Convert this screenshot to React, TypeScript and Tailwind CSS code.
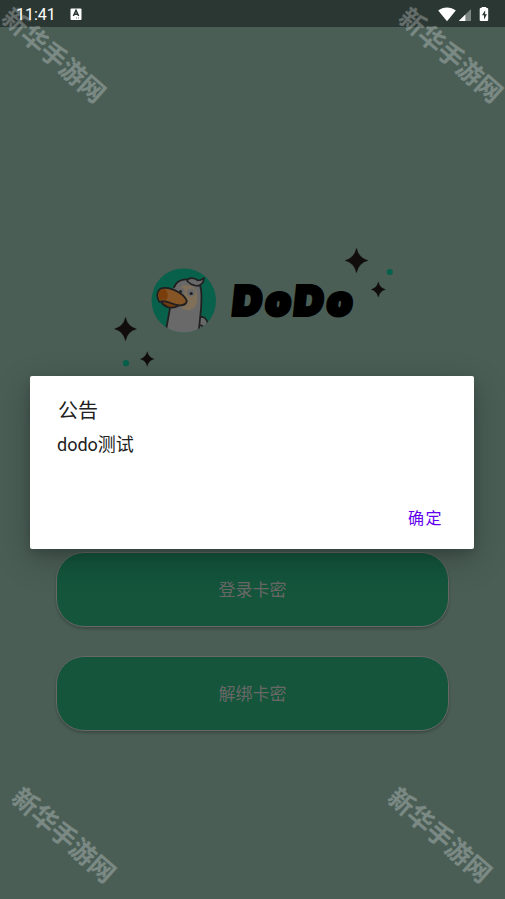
import { FC } from 'react';
import cx from "clsx"

const SANS = "font-['Roboto','Noto_Sans_CJK_SC',sans-serif]"

const StatusBar: FC = () => (
  <header className="flex h-[27px] items-center justify-between bg-[#2b3733] pl-4 pr-4 text-white">
    <div className="flex items-center gap-[15px]">
      <span className="w-[39px] pt-[2px] text-[16px] leading-[25px]">11:41</span>
      <svg width="12" height="12" viewBox="0 0 12 12">
        <rect x="0.5" y="0.5" width="11" height="11.5" rx="1" fill="#fff" />
        <path d="M3.400 8 6 2.300 8.600 8M4.400 6.300h3.200" fill="none" stroke="#26302d" strokeWidth="1.5" />
        <path d="M6 10h1M8 10h1" stroke="#6b7471" strokeWidth="1" />
      </svg>
    </div>
    <svg width="51" height="16" viewBox="438 5 51 16">
      <path d="M438.2 9.4C443.4 5.4 450.5 5.4 455.8 9.4L447 20.2z" fill="#fff" />
      <path d="M471 8v12h-12.2z" fill="#7c8582" />
      <path d="M465.4 13.6V20h-6.6z" fill="#fff" />
      <path d="M481.600 6h4.600v1h0.900q1.100 0 1.100 1.100v10.800q0 1.100-1.100 1.100h-6.300q-1.100 0-1.100-1.100V8.100q0-1.100 1.100-1.100h0.800z" fill="#fff" />
      <path d="M485.200 9.300l-3.200 5h2v4.200l3-5.200h-1.900z" fill="#2b3733" />
    </svg>
  </header>
)

interface SparkProps {
  x: number
  y: number
  r: number
}

const Spark: FC<SparkProps> = ({x, y, r}) => (
  <path
    transform={`translate(${x} ${y}) scale(${r})`}
    d="M0-1.06Q.2-.2 1 0 .2.2 0 1.06-.2.2-1 0-.2-.2 0-1.06z"
    fill="#110d0c"
    stroke="#110d0c"
    strokeWidth="0.03"
  />
)

const Logo: FC = () => (
  <svg className="mx-auto block" width="281" height="124" viewBox="112 246 281 124">
    <defs>
      <clipPath id="avatar"><circle cx="183.8" cy="300.6" r="32.2" /></clipPath>
    </defs>
    <g clipPath="url(#avatar)">
      <rect x="151" y="268" width="66" height="66" fill="#07614b" />
      <path d="M199 318C203 315 207 319 207.500 323L206 336H196z" fill="#6a696a" stroke="#211f20" strokeWidth="1.600" />
      <path d="M199.500 326q1.500-1.500 3 0l-1 2" fill="none" stroke="#211f20" strokeWidth="1.400" />
      <path d="M164.500 336 170 304C171 288 175 280 186 279 197 278 202.500 285 202 297L201 311 198 336z" fill="#6a696a" />
      <path d="M178 291C179 286 184 284.500 189 285.500 195 287 197.500 291 197.300 298 197.500 306 193 311 186 310 181 309 178 305 178 291z" fill="#80705a" />
      <circle cx="180.500" cy="291.500" r="4.200" fill="#6a696a" />
      <circle cx="191" cy="292.500" r="4" fill="#6a696a" />
      <g stroke="#211f20" strokeWidth="1.800" strokeLinejoin="round" strokeLinecap="round">
        <path d="M165 336 170 308M174 287.500C176 281.500 182 279 187 279.500M199.500 284.500C202.300 289 201.800 298 201 309L198.500 334" fill="none" />
        <path d="M187 281C189 277 194 277.500 198 280.500 202 280.500 203 278.500 204 278 204 283 200 287 195 285.500 191 285 189 283 187 281z" fill="#6a696a" strokeWidth="1.600" />
        <path d="M161.500 302C164 307 171 309 177 306.500L183 303.500 166 300z" fill="#713d10" />
        <path d="M159.500 302C155.500 296 157 287.500 165 287.800 174 288 185 295 186.800 301 186 306 179 306.500 172 303.500 168 302 164 299.500 159.500 302z" fill="#855525" />
      </g>
      <path d="M160 300.500C157 295 158.500 288.800 165 288.900 168 292 168.500 296 166.500 300 164 299 161.500 299.500 160 300.500z" fill="#7a3e0d" />
      <circle cx="180.500" cy="291.500" r="1.500" fill="#211f20" />
      <circle cx="191.200" cy="293.500" r="1.600" fill="#211f20" />
    </g>
    <text
      transform="translate(0 315) skewX(-6)"
      x="231.500 264.400 293 325.900"
      y="0"
      className="font-['Inter',sans-serif] text-[40px] font-black"
      fill="#000"
      stroke="#000"
      strokeWidth="4"
    >
      DoDo
    </text>
    <Spark x={356.500} y={260.500} r={11.500} />
    <Spark x={378.300} y={289.500} r={7.200} />
    <Spark x={125.500} y={329} r={11} />
    <Spark x={147.200} y={359} r={7} />
    <circle cx="389.800" cy="272" r="3.100" fill="#07614b" />
    <circle cx="126" cy="363.200" r="3.100" fill="#07614b" />
  </svg>
)

interface CardButtonProps {
  label: string
}

const CardButton: FC<CardButtonProps> = ({label}) => (
  <button className="h-[75px] w-full rounded-[28px] border border-[#696866] bg-[#14553c] pt-[3px] text-[17px] text-[#696866] shadow-[0_2px_3px_rgba(0,0,0,0.22)]">
    {label}
  </button>
)

const NoticeDialog: FC = () => (
  <div
    role="dialog"
    className="absolute left-[30px] top-[376px] flex h-[173px] w-[444px] flex-col rounded-[2px] bg-white px-[27px] text-[#212121] shadow-[0_10px_32px_rgba(0,0,0,0.25),0_4px_10px_rgba(0,0,0,0.12)]"
  >
    <h1 className="mt-[20px] pl-[1px] text-[20px] leading-[30px]">公告</h1>
    <p className="mt-[5px] text-[18px] leading-[28px]">dodo测试</p>
    <button className="mt-auto mb-[18px] mr-[4px] self-end text-[16px] leading-6 tracking-[1.500px] text-[#6200ee]">
      确定
    </button>
  </div>
)

interface WatermarkProps {
  className: string
}

const Watermark: FC<WatermarkProps> = ({className}) => (
  <span
    className={cx(
      "pointer-events-none absolute flex h-[30px] w-[130px] rotate-[41.500deg] items-center justify-center whitespace-nowrap text-[25.500px] font-bold leading-none text-white/27 font-['Noto_Sans_CJK_SC',sans-serif]",
      className
    )}
  >
    新华手游网
  </span>
)

const App: FC = () => (
  <div className={cx("relative h-[899px] w-[505px] overflow-hidden bg-[#4a5e56]", SANS)}>
    <StatusBar />
    <main className="flex flex-col pt-[219px]">
      <Logo />
      <div className="mt-[182px] flex flex-col gap-[29px] px-14">
        <CardButton label="登录卡密" />
        <CardButton label="解绑卡密" />
      </div>
    </main>
    <NoticeDialog />
    <Watermark className="left-[-10px] top-[39px]" />
    <Watermark className="left-[387px] top-[39px]" />
    <Watermark className="left-[0px] top-[819px]" />
    <Watermark className="left-[376px] top-[819px]" />
  </div>
)

export default App;
